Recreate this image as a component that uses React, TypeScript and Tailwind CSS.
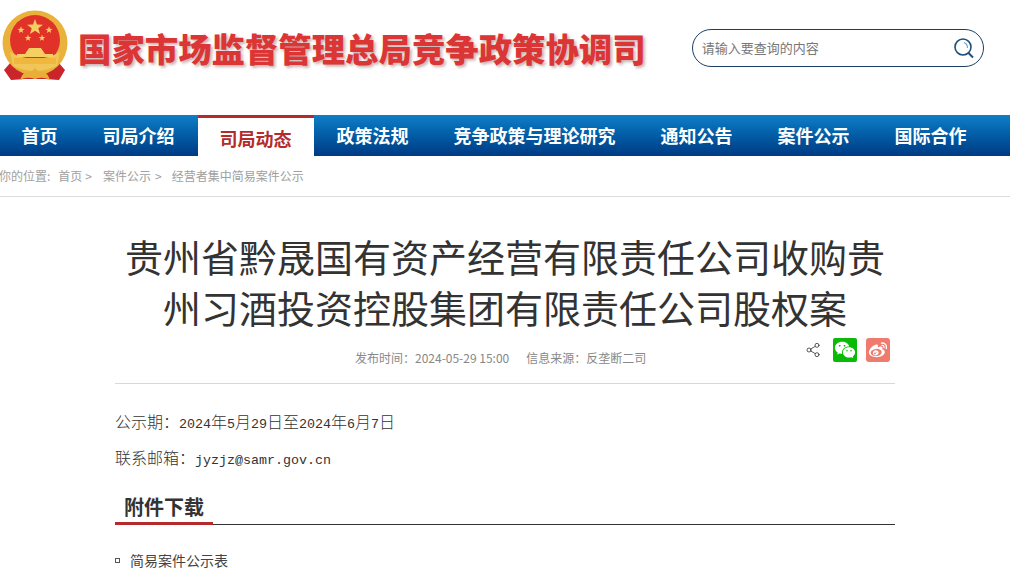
import React from "react";
import { Share2 } from "lucide-react";
import { RiWechatFill, RiWeiboFill } from "react-icons/ri";

const navItems = ["首页", "司局介绍", "司局动态", "政策法规", "竞争政策与理论研究", "通知公告", "案件公示", "国际合作"];
const cjk = "font-['Noto_Sans_CJK_SC','Noto_Sans',sans-serif]";

function Emblem() {
  const star = "M0 -5 L1.2 -1.6 L4.8 -1.5 L1.9 0.6 L2.9 4 L0 2 L-2.9 4 L-1.9 0.6 L-4.8 -1.5 L-1.2 -1.6 Z";
  return (
    <svg width="68" height="72" viewBox="0 0 68 72" className="shrink-0">
      <path d="M10 52 L3 60 L10 70 L24 69 L44 69 L58 70 L64 60 L57 52 Z" fill="#c9252b" />
      <circle cx="34" cy="33" r="32.5" fill="#eab23a" />
      <circle cx="34" cy="30" r="25" fill="#e03228" />
      <path d="M9 42 Q34 56 59 42 L56 56 Q34 66 12 56 Z" fill="#f0c659" />
      <path d="M34 9 l2 5.5 6 .2 -4.7 3.6 1.7 5.7 -5-3.3 -5 3.3 1.7-5.7 -4.7-3.6 6-.2 Z" fill="#f6cf63" />
      <path transform="translate(20 20) scale(0.75)" d={star} fill="#f6cf63" />
      <path transform="translate(48 20) scale(0.75)" d={star} fill="#f6cf63" />
      <path transform="translate(27 28) scale(0.7)" d={star} fill="#f6cf63" />
      <path transform="translate(41 28) scale(0.7)" d={star} fill="#f6cf63" />
      <path d="M24 44 L28 38 L40 38 L44 44 Z" fill="#f6cf63" />
      <rect x="16" y="44" width="36" height="3" fill="#f6cf63" />
      <rect x="13" y="48" width="42" height="6" fill="#f0b73e" />
      <path d="M19 70 Q22 60 30 62 L34 58 L38 62 Q46 60 49 70 Q42 66 34 69 Q26 66 19 70 Z" fill="#e8ae36" />
    </svg>
  );
}

function SearchIcon() {
  return (
    <svg width="22" height="22" viewBox="0 0 22 22" fill="none">
      <circle cx="10" cy="10" r="8" stroke="#1d4f7c" strokeWidth="1.6" />
      <path d="M15.5 16 L20 20.5" stroke="#1d4f7c" strokeWidth="2" />
      <path d="M11 5.5 Q14.5 7 14.5 11" stroke="#6fa3c9" strokeWidth="1.2" />
    </svg>
  );
}

function Latin({ children }: { children: string }) {
  return <span className="font-['Liberation_Mono',monospace] text-[13.33px]">{children}</span>;
}

export default function App(): React.JSX.Element {
  return (
    <div className={`${cjk} w-[1010px] h-[585px] overflow-hidden bg-white`}>
      <header className="h-[115px] flex items-start">
        <div className="mt-[10px] ml-[1px]">
          <Emblem />
        </div>
        <h1 className="ml-[9px] mt-[23px] text-[33.4px] leading-[50px] font-black whitespace-nowrap text-[#dc3535] [text-shadow:2px_2px_3px_rgba(120,60,60,0.4)]">
          国家市场监督管理总局竞争政策协调司
        </h1>
        <div className="ml-[46px] mt-[29px] w-[292px] h-[38px] rounded-full border border-[#1b3f63] flex items-center justify-between pl-[9px] pr-[8px]">
          <span className="text-[13px] text-[#777]">请输入要查询的内容</span>
          <SearchIcon />
        </div>
      </header>

      <nav className="h-[41px] flex bg-gradient-to-b from-[#0f7fc8] to-[#003a84]">
        <div className="flex -ml-[1px]">
          {navItems.map((item) =>
            item === "司局动态" ? (
              <a key={item} className="px-[22px] h-[41px] bg-white border-t-[3px] border-[#b52a2a] text-[18px] font-bold text-[#b52a2a] flex items-center pt-[3px] mx-[0.5px] whitespace-nowrap">
                {item}
              </a>
            ) : (
              <a key={item} className="px-[22.5px] h-[41px] text-[18px] font-bold text-white flex items-center whitespace-nowrap">
                {item}
              </a>
            )
          )}
        </div>
      </nav>

      <div className="h-[41px] border-b border-[#dddddd] flex items-center text-[12px] text-[#a0a0a0] whitespace-nowrap -ml-[1px]">
        <span>你的位置:</span>
        <span className="ml-[8px]">首页</span>
        <span className="ml-[3px]">&gt;</span>
        <span className="ml-[11px]">案件公示</span>
        <span className="ml-[4px]">&gt;</span>
        <span className="ml-[10px]">经营者集中简易案件公示</span>
      </div>

      <main className="w-[780px] ml-[115px]">
        <h2 className="mt-[33px] text-[38px] leading-[51px] text-[#333] text-center font-normal">
          贵州省黔晟国有资产经营有限责任公司收购贵州习酒投资控股集团有限责任公司股权案
        </h2>

        <div className="mt-[6px] h-[46px] border-b border-[#d8d8d8] flex items-start relative">
          <div className="ml-[240px] mt-[11px] text-[12px] leading-[18px] text-[#888] flex whitespace-nowrap">
            <span>发布时间：2024-05-29 15:00</span>
            <span className="ml-[17px]">信息来源：反垄断二司</span>
          </div>
          <div className="ml-auto mr-[5px] flex items-center gap-[9px]">
            <Share2 size={16} strokeWidth={1.2} className="text-[#333] mr-[3px]" />
            <span className="w-[24px] h-[24px] rounded-[2px] bg-[#09bb07] flex items-center justify-center">
              <RiWechatFill size={22} className="text-white" />
            </span>
            <span className="w-[24px] h-[24px] rounded-[3px] bg-[#ee7b6e] flex items-center justify-center">
              <RiWeiboFill size={20} className="text-white" />
            </span>
          </div>
        </div>

        <p className="mt-[21px] text-[16px] leading-[32px] text-[#333] font-light whitespace-nowrap">
          公示期：<Latin>2024</Latin>年<Latin>5</Latin>月<Latin>29</Latin>日至<Latin>2024</Latin>年<Latin>6</Latin>月<Latin>7</Latin>日
        </p>
        <p className="text-[16px] leading-[32px] text-[#333] font-light whitespace-nowrap">
          联系邮箱：<Latin>jyzjz@samr.gov.cn</Latin>
        </p>

        <div className="mt-[16px] h-[32px] border-b border-[#333] relative">
          <span className="block pl-[9px] text-[20px] leading-[28px] font-bold text-[#333]">附件下载</span>
          <span className="absolute left-0 bottom-[-1px] w-[98px] h-[3px] bg-[#b52a2a]" />
        </div>

        <div className="mt-[25px] flex items-center text-[14px] leading-[20px] text-[#444]">
          <span className="w-[5px] h-[5px] border border-[#555]" />
          <span className="ml-[10px]">简易案件公示表</span>
        </div>
      </main>
    </div>
  );
}
